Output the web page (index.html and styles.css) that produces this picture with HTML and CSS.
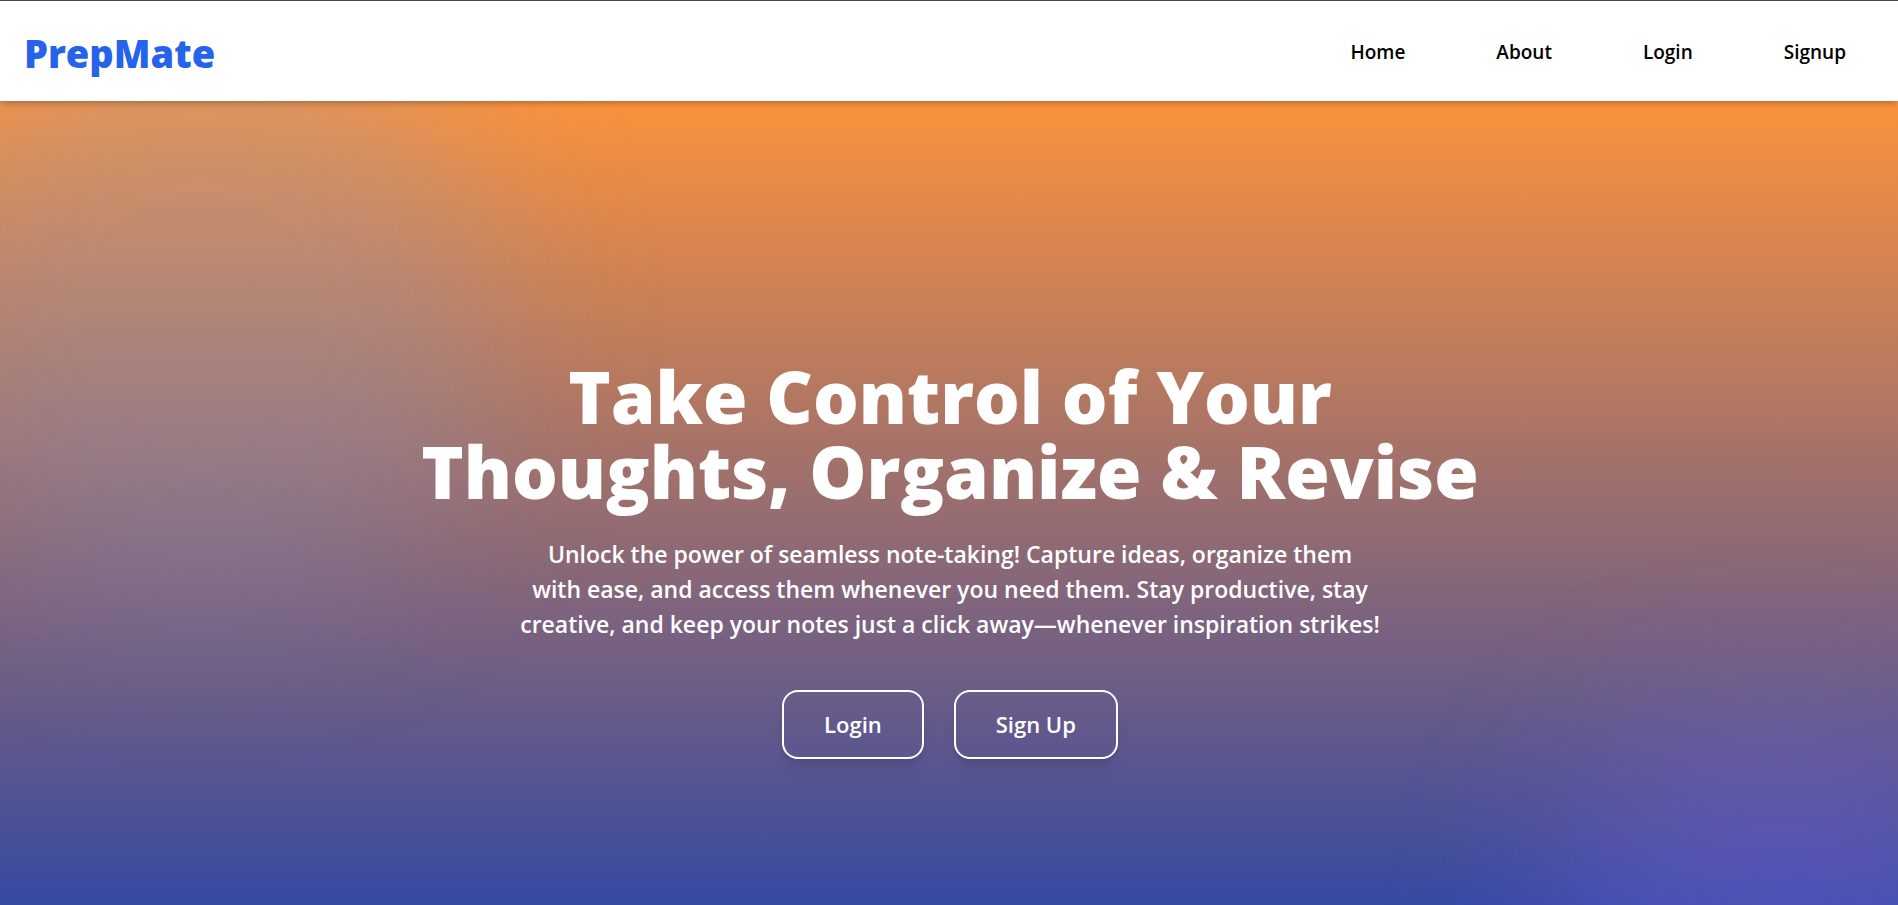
FILE: index.html
```html
<!DOCTYPE html>
<html lang="en">
<head>
<meta charset="utf-8">
<meta name="viewport" content="width=device-width, initial-scale=1">
<title>PrepMate</title>
<link rel="stylesheet" href="styles.css">
</head>
<body>
<header class="navbar">
  <a class="brand" href="#">PrepMate</a>
  <nav class="nav-links">
    <a href="#">Home</a>
    <a href="#">About</a>
    <a href="#">Login</a>
    <a href="#">Signup</a>
  </nav>
</header>
<main class="hero">
  <div class="glow glow-blue"></div>
  <div class="glow glow-purple"></div>
  <div class="hero-content">
    <h1 class="hero-title">Take Control of Your<br>Thoughts, Organize &amp; Revise</h1>
    <p class="hero-text">Unlock the power of seamless note-taking! Capture ideas, organize them<br>with ease, and access them whenever you need them. Stay productive, stay<br>creative, and keep your notes just a click away—whenever inspiration strikes!</p>
    <div class="hero-actions">
      <button class="btn" type="button">Login</button>
      <button class="btn" type="button">Sign Up</button>
    </div>
  </div>
</main>
</body>
</html>
```
FILE: styles.css
```css
* {
  box-sizing: border-box;
}

body {
  margin: 0;
  height: 100vh;
  overflow: hidden;
  display: flex;
  flex-direction: column;
  font-family: "Open Sans", "Noto Sans", sans-serif;
}

.navbar {
  position: relative;
  z-index: 1;
  flex: none;
  display: flex;
  align-items: center;
  justify-content: space-between;
  padding: 24px 52px 24px 24px;
  border-top: 1px solid #444;
  background: #fff;
  box-shadow: 0 4px 6px -1px rgba(0, 0, 0, 0.2), 0 2px 4px -2px rgba(0, 0, 0, 0.1);
}

.brand {
  padding-top: 4px;
  color: #2563eb;
  font-size: 38px;
  font-weight: 800;
  line-height: 48px;
  text-decoration: none;
}

.nav-links {
  display: flex;
  gap: 91px;
  padding-top: 2px;
}

.nav-links a {
  color: #000;
  font-size: 19px;
  font-weight: 600;
  line-height: 28px;
  text-decoration: none;
}

.hero {
  position: relative;
  flex: none;
  min-height: 100vh;
  overflow: hidden;
  display: flex;
  align-items: center;
  justify-content: center;
  padding: 10px 0 0 2px;
  background: linear-gradient(#fb923c, #1e40af);
  color: #fff;
  text-align: center;
}

.glow {
  position: absolute;
  border-radius: 50%;
  filter: blur(80px);
}

.glow-blue {
  top: -90px;
  left: -100px;
  width: 600px;
  height: 600px;
  background: rgba(96, 155, 240, 0.21);
}

.glow-purple {
  right: -110px;
  bottom: -120px;
  width: 460px;
  height: 420px;
  background: rgba(140, 108, 240, 0.26);
}

.hero-content {
  position: relative;
}

.hero-title {
  margin: 0 0 28px;
  font-size: 72px;
  font-weight: 800;
  line-height: 75px;
}

.hero-text {
  margin: 0 0 48px;
  font-size: 23px;
  font-weight: 600;
  line-height: 35px;
}

.hero-actions {
  display: flex;
  justify-content: center;
  gap: 30px;
}

.btn {
  padding: 16px 40px;
  border: 2px solid #fff;
  border-radius: 16px;
  background: transparent;
  box-shadow: 0 10px 15px -3px rgba(0, 0, 0, 0.1), 0 4px 6px -4px rgba(0, 0, 0, 0.1);
  color: inherit;
  font-family: inherit;
  font-size: 22px;
  font-weight: 600;
  line-height: 33px;
}
```
